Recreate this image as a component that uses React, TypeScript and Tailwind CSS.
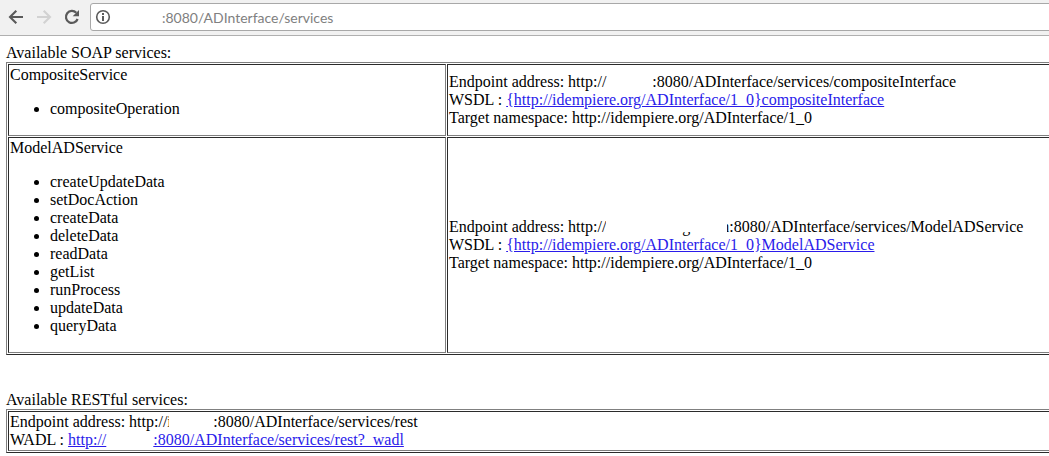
// Define the SOAP service type
interface SoapService {
  name: string;
  operations: string[];
  port: string;
}

const soapServices: SoapService[] = [
  {
    name: 'CompositeService',
    operations: ['compositeOperation'],
    port: 'compositeInterface',
  },
  {
    name: 'ModelADService',
    operations: [
      'createUpdateData',
      'setDocAction',
      'createData',
      'deleteData',
      'readData',
      'getList',
      'runProcess',
      'updateData',
      'queryData',
    ],
    port: 'ModelADService',
  },
];

const tableStyle =
  'w-full border-separate border-spacing-px border border-t-[#808080] border-l-[#808080] border-b-[#2b2b2b] border-r-[#2b2b2b]';
const cellStyle =
  'border border-t-[#2b2b2b] border-l-[#2b2b2b] border-b-[#808080] border-r-[#808080] p-px align-middle';
const linkStyle = 'text-[#2a1bea] underline';

// Blanked out host names, with the bits of letters that stay visible
const ShortHost = () => <span className="inline-block w-[46px]" />;

const LongHost = () => (
  <span className="relative inline-block w-[123px] text-right">
    <span className="mr-[31px]">g</span>
    <span>n</span>
    <span className="absolute top-0 left-0 h-[14px] w-[100px] bg-white" />
    <span className="absolute top-0 right-[2px] h-[18px] w-[30px] bg-white" />
  </span>
);

const RestHost = () => (
  <span className="relative inline-block w-[46px]">
    i
    <span className="absolute top-0 left-[2px] h-[18px] w-[10px] bg-white" />
  </span>
);

const BackIcon = () => (
  <svg width="16" height="16" viewBox="0 0 16 16" fill="none" stroke="currentColor" strokeWidth="2.1">
    <path d="M15 8H2.5M8.3 1.7L2 8l6.3 6.3" />
  </svg>
);

const ForwardIcon = () => (
  <svg width="16" height="16" viewBox="0 0 16 16" fill="none" stroke="currentColor" strokeWidth="2.1">
    <path d="M1 8h12.5M7.7 1.7L14 8l-6.3 6.3" />
  </svg>
);

const ReloadIcon = () => (
  <svg width="16" height="16" viewBox="0 0 16 16" fill="none">
    <path d="M13.6 10A6 6 0 1 1 12.3 3.8" stroke="currentColor" strokeWidth="2.2" />
    <path d="M15 1v6.3H8.7z" fill="currentColor" />
  </svg>
);

const InfoIcon = () => (
  <svg width="16" height="16" viewBox="0 0 16 16" fill="none" className="text-[#5a5a5a]">
    <circle cx="8" cy="8" r="6.3" stroke="currentColor" strokeWidth="1.6" />
    <path d="M7 4h2v2H7zM7 7h2v5H7z" fill="currentColor" />
  </svg>
);

const BrowserBar = () => (
  <header className="flex h-9 items-center overflow-hidden border-b border-[#b0b0b0] bg-[#f1f1f1] pb-px pl-2">
    <button type="button" aria-label="Back" className="mr-3 text-[#5a5a5a]">
      <BackIcon />
    </button>
    <button type="button" aria-label="Forward" disabled className="mr-3 text-[#d2d2d2]">
      <ForwardIcon />
    </button>
    <button type="button" aria-label="Reload" className="mr-[10px] text-[#5a5a5a]">
      <ReloadIcon />
    </button>
    <div className="-mr-2 flex h-7 flex-1 items-center rounded-[3px] border border-[#a8a8a8] bg-white pl-1">
      <InfoIcon />
      <input
        aria-label="Address"
        defaultValue=":8080/ADInterface/services"
        className="min-w-0 flex-1 bg-transparent pl-[51px] font-[Lato,sans-serif] text-[14px] text-[#808080] outline-none"
      />
    </div>
  </header>
);

const App = () => {
  return (
    <div className="min-h-screen overflow-hidden bg-white text-black">
      <BrowserBar />

      {/* Main content */}
      <main className="-mr-2 pt-2 pl-[6px] font-['Liberation_Serif',serif] text-[16px] leading-[18px]">
        <h1>Available SOAP services:</h1>
        <table className={tableStyle}>
          <tbody>
            {soapServices.map((service) => (
              <tr key={service.name}>
                <td className={`${cellStyle} w-[438px]`}>
                  <div>{service.name}</div>
                  <ul className="my-4 list-disc pl-10">
                    {service.operations.map((operation) => (
                      <li key={operation}>{operation}</li>
                    ))}
                  </ul>
                </td>
                <td className={cellStyle}>
                  <div>
                    Endpoint address: http://
                    {service.name === 'ModelADService' ? <LongHost /> : <ShortHost />}
                    :8080/ADInterface/services/{service.port}
                  </div>
                  <div>
                    WSDL :{' '}
                    <a href="#wsdl" className={linkStyle}>
                      {`{http://idempiere.org/ADInterface/1_0}${service.port}`}
                    </a>
                  </div>
                  <div>Target namespace: http://idempiere.org/ADInterface/1_0</div>
                </td>
              </tr>
            ))}
          </tbody>
        </table>

        <h1 className="mt-9">Available RESTful services:</h1>
        <table className={tableStyle}>
          <tbody>
            <tr>
              <td className={cellStyle}>
                <div>
                  Endpoint address: http://
                  <RestHost />
                  :8080/ADInterface/services/rest
                </div>
                <div>
                  WADL :{' '}
                  <a href="#wadl" className={linkStyle}>
                    http://
                    <span className="inline-block w-[47px]" />
                    :8080/ADInterface/services/rest?_wadl
                  </a>
                </div>
              </td>
            </tr>
          </tbody>
        </table>
      </main>
    </div>
  );
};

export default App;
